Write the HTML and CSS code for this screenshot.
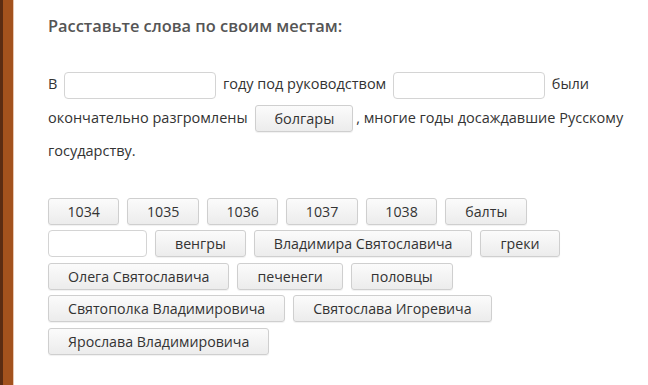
FILE: index.html
```html
<!DOCTYPE html>
<html lang="ru">
<head>
  <meta charset="UTF-8">
  <title>Расставьте слова</title>
  <link rel="stylesheet" href="styles.css">
</head>
<body>
  <div class="page">
    <div class="sidebar"></div>
    <div class="task">
      <h2 class="task-title">Расставьте слова по своим местам:</h2>
      <p class="task-text">
        В <span class="slot slot-wide"></span> году под руководством <span class="slot slot-wide"></span> были
        окончательно разгромлены <span class="word word-inline">болгары</span> , многие годы досаждавшие Русскому
        государству.
      </p>
      <div class="word-bank">
        <span class="word word-num">1034</span>
        <span class="word word-num">1035</span>
        <span class="word word-num">1036</span>
        <span class="word word-num">1037</span>
        <span class="word word-num">1038</span>
        <span class="word">балты</span>
        <span class="slot slot-empty"></span>
        <span class="word">венгры</span>
        <span class="word">Владимира Святославича</span>
        <span class="word">греки</span>
        <span class="word">Олега Святославича</span>
        <span class="word">печенеги</span>
        <span class="word">половцы</span>
        <span class="word">Святополка Владимировича</span>
        <span class="word">Святослава Игоревича</span>
        <span class="word">Ярослава Владимировича</span>
      </div>
    </div>
  </div>
</body>
</html>
```

FILE: styles.css
```css
body {
    margin: 0;
    background: #ffffff;
    font-family: 'Open Sans', sans-serif;
    color: #333;
}
.page {
    display: flex;
    min-height: 385px;
}
.sidebar {
    width: 10px;
    flex: none;
    border-left: 3px solid #5a2c12;
    border-right: 1px solid #e9c7b0;
    background: #a3521d;
}
.task {
    padding: 16px 0 0 34px;
    flex: 1;
}
.task-title {
    margin: 0;
    font-size: 16.4px;
    line-height: 20px;
    font-weight: 600;
    color: #555;
}
.task-text {
    margin: 31px 0 0;
    font-size: 14.5px;
    line-height: 33.5px;
    max-width: 590px;
}
.slot {
    display: inline-block;
    box-sizing: border-box;
    height: 27px;
    background: #fff;
    border: 1px solid #d4d4d4;
    border-radius: 4px;
    vertical-align: middle;
}
.slot-wide {
    width: 152px;
    margin: 0 3px;
}
.slot-empty {
    width: 99px;
}
.word {
    display: inline-block;
    box-sizing: border-box;
    height: 27px;
    padding: 0 19px;
    line-height: 25px;
    font-size: 14.2px;
    color: #333;
    background: linear-gradient(#fbfbfb, #ececec);
    border: 1px solid #cfcfcf;
    border-radius: 3px;
    box-shadow: 0 1px 1px rgba(0, 0, 0, 0.06);
}
.word-num {
    padding: 0 18.5px;
}
.word-inline {
    vertical-align: middle;
    font-size: 14.5px;
    padding: 0 18px;
    margin: 0 -1px 0 4px;
}
.word-bank {
    display: flex;
    flex-wrap: wrap;
    gap: 5.5px 8px;
    margin-top: 30px;
    max-width: 560px;
}
```
